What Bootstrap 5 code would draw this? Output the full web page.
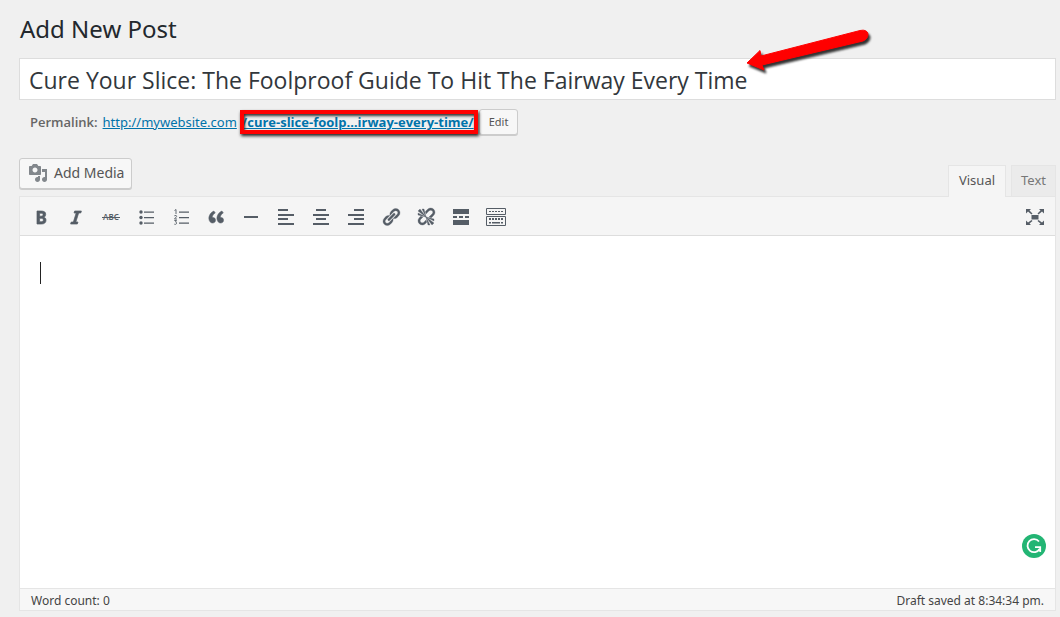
<!DOCTYPE html>
<html lang="en">
<head>
<meta charset="utf-8">
<meta name="viewport" content="width=device-width, initial-scale=1">
<title>Add New Post</title>
<link href="https://cdn.jsdelivr.net/npm/bootstrap@5.3.0/dist/css/bootstrap.min.css" rel="stylesheet">
<style>
  body { background: #f0f0f0; color: #444; font-family: "Noto Sans", "Open Sans", sans-serif; font-size: 13px; line-height: 20px; }
  .page { min-height: 100vh; padding: 12px 4px 6px 19px; }
  .page-title { padding-left: 1px; font-size: 24px; line-height: 34px; font-weight: 400; color: #23282d; }
  .title-input { height: 42px; padding: 2px 9px 0; border: 1px solid #ddd; border-radius: 0; font-family: "Open Sans", sans-serif; font-size: 23px; line-height: 36px; color: #32373c; }
  .permalink { height: 28px; padding-left: 11px; font-size: 13px; color: #666; }
  .permalink a { color: #0073aa; }
  .slug { padding: 0 5px; font-family: "Open Sans", sans-serif; }
  .slug-frame { inset: -2px 1px -2px 3px; border: 4px solid red; box-shadow: 1px 2px 3px #222, inset 1px 2px 3px #333; pointer-events: none; }
  .semi { margin-right: 5px; font-family: "Open Sans", sans-serif; font-weight: 600; }
  .wp-btn { background: #f7f7f7; border: 1px solid #ccc; border-radius: 3px; box-shadow: 0 1px 0 #ccc; color: #555; }
  .edit-btn { height: 26px; padding: 0 9px; font-size: 11px; line-height: 20px; }
  .media-btn { height: 31px; padding: 0 7px 2px 8px; margin-bottom: 7px; gap: 6px; font-size: 14px; }
  .media-btn svg { fill: #82878c; }
  .tabs { gap: 5px; }
  .media-row { margin-top: 22px; }
  .tab-btn { height: 31px; padding: 0 9px 2px; border: 1px solid #e5e5e5; border-bottom: 0; background: #ebebeb; color: #777; }
  .tab-btn.active { background: #f5f5f5; color: #555; margin-bottom: -1px; height: 32px; padding: 0 10px 3px; }
  .editor { border: 1px solid #e5e5e5; }
  .toolbar { height: 39px; padding: 1px 5px 0; background: #f5f5f5; border-bottom: 1px solid #ddd; }
  .tool { width: 31px; height: 28px; padding: 0; border: 0; background: none; color: #555d66; display: grid; place-items: center; }
  .tool svg { fill: currentColor; }
  .writing { resize: none; border: 0; outline: 0; padding: 24px 20px; background: #fff; font-size: 16px; caret-color: transparent; }
  .caret { left: 20px; top: 26px; width: 1px; height: 22px; background: #222; }
  .checker { right: 9px; bottom: 30px; width: 24px; height: 24px; padding: 0; border: 0; background: #23b574; }
  .status { height: 22px; padding: 2px 11px 0; border-top: 1px solid #e5e5e5; background: #f7f7f7; font-size: 12px; }
  .arrow { left: 720px; top: -34px; pointer-events: none; overflow: visible; }
</style>
</head>
<body>
<main class="page d-flex flex-column">
  <h1 class="page-title mb-0">Add New Post</h1>

  <div class="position-relative mt-2 pt-1">
    <input type="text" aria-label="Title" class="title-input d-block w-100" value="Cure Your Slice: The Foolproof Guide To Hit The Fairway Every Time">
    <svg class="arrow position-absolute" width="136" height="60" viewBox="0 0 136 60" aria-hidden="true">
      <path d="M8 43 21 30.500 22 36 121 10.500Q128 9 129 14Q129 19 124 21L23 45 25 50Z" fill="red" stroke="red" stroke-width="1" stroke-linejoin="round" style="filter:drop-shadow(2px 3px 1px #333)"/>
    </svg>
  </div>

  <div class="permalink d-flex align-items-center mt-2">
    <strong class="semi">Permalink:</strong>
    <a href="#">http://mywebsite.com</a>
    <span class="slug position-relative"><a href="#" class="fw-bold">/cure-slice-foolp…irway-every-time/</a><span class="slug-frame position-absolute"></span></span>
    <button type="button" class="wp-btn edit-btn">Edit</button>
  </div>

  <div class="media-row d-flex justify-content-between align-items-end">
    <button type="button" class="wp-btn media-btn d-flex align-items-center">
      <svg width="20" height="20" viewBox="0 0 20 20" aria-hidden="true"><path d="M13 11V4c0-.55-.45-1-1-1h-1.670L9 1H5L3.670 3H2c-.55 0-1 .45-1 1v7c0 .55.45 1 1 1h10c.55 0 1-.45 1-1zM7 4.500c1.380 0 2.500 1.120 2.500 2.500S8.380 9.500 7 9.500 4.500 8.380 4.500 7 5.620 4.500 7 4.500zM14 6h5v10.500c0 1.380-1.120 2.500-2.500 2.500S14 17.880 14 16.500s1.120-2.500 2.500-2.500c.17 0 .34.02.5.05V9h-3V6zm-4 8.050V13h2v3.500c0 1.380-1.120 2.500-2.500 2.500S7 17.880 7 16.500 8.120 14 9.500 14c.17 0 .34.02.5.05z"/></svg>
      Add Media
    </button>
    <div class="tabs d-flex align-items-end">
      <button type="button" class="tab-btn active position-relative">Visual</button>
      <button type="button" class="tab-btn">Text</button>
    </div>
  </div>

  <section class="editor flex-grow-1 d-flex flex-column">
    <div class="toolbar d-flex align-items-center gap-1" role="toolbar" aria-label="Formatting">
      <button type="button" class="tool" aria-label="Bold"><svg width="20" height="20" viewBox="0 0 20 20"><path stroke="currentColor" stroke-width=".7" d="M6 4v13h4.540c1.370 0 2.460-.33 3.260-1 .8-.66 1.200-1.580 1.200-2.770 0-.84-.17-1.510-.51-2.010s-.9-.85-1.670-1.030v-.09c.57-.1 1.020-.4 1.360-.9s.51-1.130.51-1.910c0-1.140-.39-1.980-1.170-2.500C12.750 4.260 11.500 4 9.780 4H6zm2.570 5.150V6.260h1.360c.73 0 1.270.11 1.610.32.34.22.51.58.51 1.070 0 .54-.16.92-.47 1.150s-.82.35-1.510.35h-1.500zm0 2.190h1.600c1.440 0 2.160.53 2.160 1.610 0 .6-.17 1.050-.51 1.340s-.86.43-1.570.43H8.570v-3.380z"/></svg></button>
      <button type="button" class="tool" aria-label="Italic"><svg width="20" height="20" viewBox="0 0 20 20"><path stroke="currentColor" stroke-width=".7" d="M14.780 6h-2.130l-2.800 9h2.120l-.62 2H4.600l.62-2h2.140l2.800-9H8.030l.62-2h6.750z"/></svg></button>
      <button type="button" class="tool" aria-label="Strikethrough"><svg width="20" height="20" viewBox="0 0 20 20"><text x="10" y="13" text-anchor="middle" font-size="8" font-weight="600">ABC</text><path d="M1 10h18v1H1z"/></svg></button>
      <button type="button" class="tool" aria-label="Bulleted list"><svg width="20" height="20" viewBox="0 0 20 20"><circle cx="5" cy="5" r="1.700"/><circle cx="5" cy="10.500" r="1.700"/><circle cx="5" cy="16" r="1.700"/><path d="M8 4.500h10v1.200H8zM8 10h10v1.200H8zM8 15.500h10v1.200H8z"/></svg></button>
      <button type="button" class="tool" aria-label="Numbered list"><svg width="20" height="20" viewBox="0 0 20 20"><path d="M8 4.500h10v1.200H8zM8 10h10v1.200H8zM8 15.500h10v1.200H8z"/><path d="M3.500 3.500 5 2.500V7M3.300 8.800Q5.800 7.700 5.600 9.500L3.500 12H6M3.300 13.500H5.500L4.500 15Q6 15.200 5.500 16.700 5 17.700 3.300 17.200" fill="none" stroke="currentColor" stroke-width=".9"/></svg></button>
      <button type="button" class="tool" aria-label="Blockquote"><svg width="20" height="20" viewBox="0 0 20 20"><path stroke="currentColor" stroke-width=".5" d="M9.490 13.220c0-.74-.2-1.380-.61-1.900-.62-.78-1.830-.88-2.530-.72-.29-1.650 1.110-3.750 2.920-4.650L7.880 4c-2.730 1.300-5.420 4.280-4.960 8.050C3.210 14.430 4.590 16 6.540 16c.85 0 1.560-.25 2.120-.75s.83-1.180.83-2.030zm8.050 0c0-.74-.2-1.380-.61-1.900-.63-.78-1.830-.88-2.530-.72-.29-1.650 1.110-3.750 2.920-4.650L15.930 4c-2.730 1.300-5.410 4.280-4.950 8.050.29 2.380 1.660 3.950 3.610 3.950.85 0 1.560-.25 2.120-.75s.83-1.180.83-2.030z"/></svg></button>
      <button type="button" class="tool" aria-label="Horizontal line"><svg width="20" height="20" viewBox="0 0 20 20"><path d="M3 9h14v2H3z"/></svg></button>
      <button type="button" class="tool" aria-label="Align left"><svg width="20" height="20" viewBox="0 0 20 20"><path d="M2 2h10v2H2zM2 7h16v2H2zM2 11h10v2H2zM2 16h16v2H2z"/></svg></button>
      <button type="button" class="tool" aria-label="Align center"><svg width="20" height="20" viewBox="0 0 20 20"><path d="M5 2h10v2H5zM2 7h16v2H2zM5 11h10v2H5zM2 16h16v2H2z"/></svg></button>
      <button type="button" class="tool" aria-label="Align right"><svg width="20" height="20" viewBox="0 0 20 20"><path d="M8 2h10v2H8zM2 7h16v2H2zM8 11h10v2H8zM2 16h16v2H2z"/></svg></button>
      <button type="button" class="tool" aria-label="Insert link"><svg width="20" height="20" viewBox="0 0 20 20"><path stroke="currentColor" stroke-width=".3" d="M17.740 2.760c1.680 1.690 1.680 4.410 0 6.100l-1.530 1.520c-1.120 1.120-2.700 1.470-4.140 1.090l2.620-2.610.76-.77.76-.76c.84-.84.84-2.200 0-3.040-.84-.85-2.200-.85-3.040 0l-.77.76-3.380 3.380c-.37-1.440-.02-3.020 1.100-4.140l1.520-1.530c1.690-1.680 4.420-1.680 6.100 0zM8.590 13.430l5.340-5.340c.42-.42.42-1.100 0-1.520-.44-.43-1.130-.39-1.530 0l-5.330 5.340c-.42.42-.42 1.100 0 1.520.44.43 1.130.39 1.520 0zm-.76 2.290l4.140-4.150c.38 1.440.03 3.020-1.090 4.140l-1.520 1.530c-1.690 1.680-4.410 1.680-6.100 0-1.680-1.680-1.680-4.420 0-6.100l1.530-1.520c1.120-1.120 2.700-1.470 4.140-1.100l-4.140 4.150c-.85.84-.85 2.200 0 3.050.84.84 2.200.84 3.040 0z"/></svg></button>
      <button type="button" class="tool" aria-label="Remove link"><svg width="20" height="20" viewBox="0 0 20 20"><path stroke="currentColor" stroke-width=".3" d="M17.740 2.260c1.680 1.690 1.680 4.410 0 6.100l-1.530 1.520c-.32.33-.69.58-1.080.77L13 10l1.690-1.640.76-.77.76-.76c.84-.84.84-2.200 0-3.040-.84-.85-2.200-.85-3.040 0l-.77.76-.76.76L10 7l-.65-2.140c.19-.38.44-.75.77-1.070l1.520-1.530c1.690-1.680 4.420-1.680 6.100 0zM2 4l8 6-6-8zm4-2l4 8-2-8H6zM2 6l8 4-8-2V6zm7.360 7.690L10 13l.74 2.350-1.380 1.390c-1.690 1.680-4.410 1.680-6.100 0-1.680-1.680-1.680-4.420 0-6.100l1.390-1.380L7 10l-.69.64-1.520 1.530c-.85.84-.85 2.200 0 3.040.84.85 2.200.85 3.040 0zM18 16l-8-6 6 8zm-4 2l-4-8 2 8h2zm4-4l-8-4 8 2v2z"/></svg></button>
      <button type="button" class="tool" aria-label="Read more tag"><svg width="20" height="20" viewBox="0 0 20 20"><path d="M2 2h16v5H2zM2 9h4v2H2zM8 9h4v2H8zM14 9h4v2h-4zM2 13h16v5H2z"/></svg></button>
      <button type="button" class="tool" aria-label="Toolbar toggle"><svg width="20" height="20" viewBox="0 0 20 20"><path d="M.5 1.500h19v6H.5zM.5 9.500h19v9H.5z" fill="none" stroke="currentColor"/><path d="M3 4h2v1H3zM6 4h2v1H6zM9 4h2v1H9zM12 4h2v1h-2zM15 4h2v1h-2zM3 11h2v2H3zM6 11h2v2H6zM9 11h2v2H9zM12 11h2v2h-2zM15 11h2v2h-2zM3 15h2v1.500H3zM6 15h8v1.500H6zM15 15h2v1.500h-2z"/></svg></button>
      <button type="button" class="tool ms-auto" aria-label="Distraction-free writing"><svg width="20" height="20" viewBox="0 0 20 20"><path d="M6.500 8h7v4.500h-7zM1 2h5L4.500 3.500 7.500 6.500 6.500 7.500 3 4.500 1 6.500zM19 2h-5l1.500 1.500-3 3 1 1L17 4.500l2 2zM1 18h5l-1.500-1.500 3-2.500-1-1L3 15.500 1 13.500zM19 18h-5l1.500-1.500-3-2.500 1-1 3.500 2.500 2-2z"/></svg></button>
    </div>
    <div class="position-relative flex-grow-1 d-flex">
      <textarea class="writing flex-grow-1" aria-label="Post content"></textarea>
      <span class="caret position-absolute"></span>
      <button type="button" class="checker position-absolute rounded-circle" aria-label="Check writing"><svg class="d-block" width="24" height="24" viewBox="0 0 24 24" fill="none" stroke="#fff" stroke-width="1.800"><path d="M17 7.500A6.500 6.500 0 1 0 17.600 15M13 13.200h5.200V18"/></svg></button>
    </div>
    <div class="status d-flex justify-content-between align-items-center">
      <span>Word count: 0</span>
      <span>Draft saved at 8:34:34 pm.</span>
    </div>
  </section>
</main>
<script src="https://cdn.jsdelivr.net/npm/bootstrap@5.3.0/dist/js/bootstrap.bundle.min.js"></script>
</body>
</html>
